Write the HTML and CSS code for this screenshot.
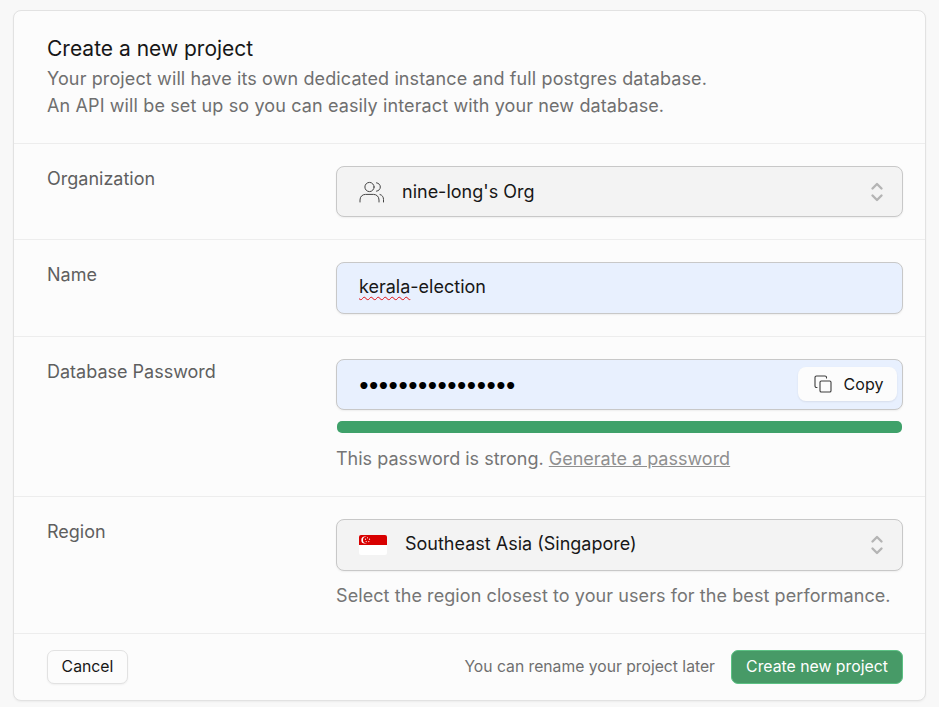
FILE: index.html
```html
<!DOCTYPE html>
<html lang="en">
<head>
<meta charset="utf-8">
<title>Create a new project</title>
<link rel="stylesheet" href="styles.css">
</head>
<body>
<main class="card">
  <header class="card-head">
    <h1 class="title">Create a new project</h1>
    <p class="desc">Your project will have its own dedicated instance and full postgres database.</p>
    <p class="desc">An API will be set up so you can easily interact with your new database.</p>
  </header>
  <section class="row">
    <div class="label">Organization</div>
    <div class="control">
      <div class="field select org">
        <svg class="org-icon" viewBox="0 0 26 24" width="26" height="24" fill="none" stroke="#444" stroke-width="1" stroke-linecap="round"><circle cx="10.500" cy="7" r="4.600"/><path d="M1 22v-2c0-3.400 2.400-5.600 5.500-5.600h8c3.100 0 5.500 2.200 5.500 5.600v2"/><path d="M17.500 2.800c2.400.4 3.800 2.100 3.800 4.200s-1.400 3.800-3.800 4.200"/><path d="M21 14.500c2.400.6 3.500 2.600 3.500 5V22"/></svg>
        <span class="value grow">nine-long's Org</span>
        <svg class="chev" viewBox="0 0 14 22" width="14" height="22" fill="none" stroke="#b4b4b4" stroke-width="2.4" stroke-linecap="round" stroke-linejoin="round"><path d="M2.500 7.500 7 3l4.500 4.500"/><path d="M2.500 14.500 7 19l4.500-4.500"/></svg>
      </div>
    </div>
  </section>
  <section class="row">
    <div class="label">Name</div>
    <div class="control">
      <div class="field filled"><span class="value up"><span class="misspelt">kerala</span>-election</span></div>
    </div>
  </section>
  <section class="row row-pwd">
    <div class="label">Database Password</div>
    <div class="control">
      <div class="field filled pwd">
        <span class="dots">••••••••••••••••</span>
        <button class="copy" type="button">
          <svg viewBox="0 0 18 18" width="18" height="18" fill="none" stroke="#3c3c3c" stroke-width="1.1" stroke-linecap="round" stroke-linejoin="round"><rect x="6" y="6" width="11" height="11" rx="1.300"/><path d="M3 12.500H2.500A1.500 1.500 0 0 1 1 11V2.500A1.500 1.500 0 0 1 2.500 1H11a1.500 1.500 0 0 1 1.500 1.500V3"/></svg>
          Copy
        </button>
      </div>
      <div class="strength"></div>
      <p class="help">This password is strong. <a class="link" href="#">Generate a password</a></p>
    </div>
  </section>
  <section class="row row-region">
    <div class="label">Region</div>
    <div class="control">
      <div class="field select">
        <svg class="flag" viewBox="0 0 28 20" width="28" height="20"><rect width="28" height="10" fill="#d80000"/><rect y="10" width="28" height="10" fill="#fff"/><circle cx="5.800" cy="5" r="3.500" fill="#fff"/><circle cx="7.200" cy="5" r="3.200" fill="#d80000"/><g fill="#fff"><circle cx="8.500" cy="2.800" r=".6"/><circle cx="10.500" cy="4.200" r=".6"/><circle cx="9.800" cy="6.600" r=".6"/><circle cx="7.200" cy="6.600" r=".6"/><circle cx="6.500" cy="4.200" r=".6"/></g></svg>
        <span class="value grow up">Southeast Asia (Singapore)</span>
        <svg class="chev" viewBox="0 0 14 22" width="14" height="22" fill="none" stroke="#b4b4b4" stroke-width="2.4" stroke-linecap="round" stroke-linejoin="round"><path d="M2.500 7.500 7 3l4.500 4.500"/><path d="M2.500 14.500 7 19l4.500-4.500"/></svg>
      </div>
      <p class="help help-wide">Select the region closest to your users for the best performance.</p>
    </div>
  </section>
  <footer class="foot">
    <button class="btn cancel" type="button">Cancel</button>
    <div class="foot-right">
      <span class="note">You can rename your project later</span>
      <button class="btn primary" type="button">Create new project</button>
    </div>
  </footer>
</main>
</body>
</html>
```
FILE: styles.css
```css
* { box-sizing: border-box; }
html, body { height: 100%; }
body {
  margin: 0;
  padding: 10px 13px 0;
  background: #f8f8f8;
  color: #171717;
  font-family: "Inter", "Liberation Sans", sans-serif;
  font-size: 18px;
  overflow: hidden;
}
.card {
  width: 913px;
  height: 691px;
  background: #fcfcfc;
  border: 1px solid #e2e2e2;
  border-radius: 8px;
  box-shadow: 0 1px 2px rgba(0,0,0,.05);
  display: flex;
  flex-direction: column;
}
.card-head {
  height: 133px;
  padding: 24px 22px 0 33px;
  border-bottom: 1px solid #ededed;
}
.title { margin: 0 0 2px; font-size: 21px; font-weight: 400; line-height: 28px; color: #171717; }
.desc { margin: 0; font-size: 18px; line-height: 27px; letter-spacing: .12px; color: #6f6f6f; }
.row {
  display: grid;
  grid-template-columns: 289px 1fr;
  padding: 22px 22px 22px 33px;
  border-bottom: 1px solid #ededed;
}
.row-pwd { padding-bottom: 24px; }
.row-region { padding-bottom: 24px; }
.label { padding-top: 1px; font-size: 18px; line-height: 24px; color: #5f5f5f; }
.field {
  height: 52px;
  display: flex;
  align-items: center;
  border: 1px solid #c8c8c8;
  border-radius: 8px;
  padding: 0 22px;
  box-shadow: 0 1px 2px rgba(0,0,0,.06);
}
.select { background: #f3f3f3; }
.org { height: 51px; }
.filled { background: #e8f0fe; }
.value { font-size: 18px; color: #171717; }
.up { margin-top: -4px; }
.org-icon { margin-right: 17px; }
.flag { margin-right: 18px; border-radius: 2px; }
.grow { flex: 1; }
.chev { margin-right: -4px; }
.misspelt { text-decoration: underline wavy #e01010 1.200px; text-underline-offset: 3px; }
.pwd { position: relative; height: 51px; }
.dots { margin: 2px 0 0 -1.500px; font-family: "DejaVu Sans", sans-serif; font-size: 20px; font-weight: 700; letter-spacing: -3px; color: #000; flex: 1; }
.copy {
  position: absolute;
  top: 7px;
  right: 5px;
  height: 34px;
  width: 99px;
  display: flex;
  align-items: center;
  justify-content: center;
  gap: 12px;
  padding: 0 0 0 2px;
  background: #fcfcfc;
  border: 0;
  border-radius: 8px;
  font: inherit;
  font-size: 16px;
  color: #171717;
  box-shadow: 0 1px 2px rgba(0,0,0,.08);
}
.strength { height: 12px; margin: 11px 1px 0; background: #3fa16a; border-radius: 5px; }
.help { margin: 13px 0 0; font-size: 18px; line-height: 26px; color: #757575; }
.help-wide { margin-top: 12px; letter-spacing: .08px; }
.link { color: #8f8f8f; text-decoration: underline; }
.foot {
  flex: 1;
  display: flex;
  align-items: center;
  justify-content: space-between;
  padding: 0 22px 0 33px;
}
.foot-right { display: flex; align-items: center; gap: 16px; }
.note { margin-top: -2px; font-size: 15.700px; color: #6f6f6f; }
.btn {
  height: 34px;
  border-radius: 7px;
  font: inherit;
  font-size: 15.800px;
  padding: 0 0 2px;
  white-space: nowrap;
}
.cancel { width: 81px; background: #fcfcfc; border: 1px solid #e2e2e2; color: #171717; box-shadow: 0 1px 2px rgba(0,0,0,.05); }
.primary { width: 172px; background: #479a67; border: 1px solid #5cc184; color: #fff; }
```
